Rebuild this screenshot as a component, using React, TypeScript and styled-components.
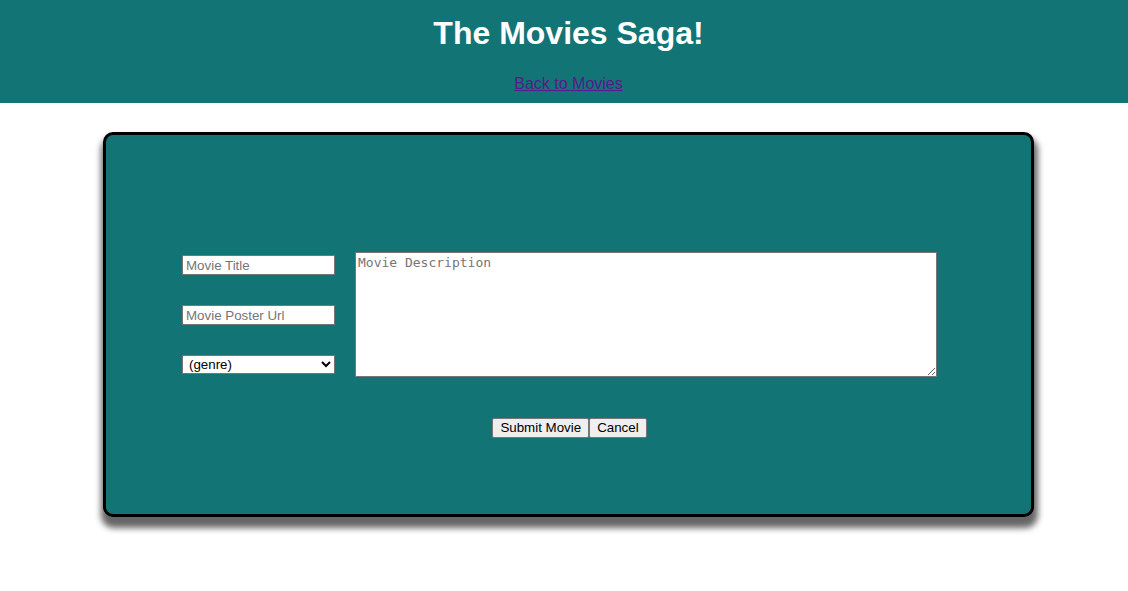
import React from 'react';
import styled, { createGlobalStyle } from 'styled-components';

const GlobalStyle = createGlobalStyle`
  html, body {
    margin: 0;
    padding: 0;
    background: #ffffff;
    font-family: "Liberation Sans", Arial, sans-serif;
  }
`;

const teal = '#127474';

const Header = styled.header`
  background: ${teal};
  height: 103px;
  padding: 15px 0 0 9px;
  box-sizing: border-box;
  display: flex;
  flex-direction: column;
  align-items: center;
`;

const Title = styled.h1`
  margin: 0;
  font-size: 32px;
  font-weight: bold;
  color: #ffffff;
  line-height: 37px;
`;

const BackLink = styled.a`
  margin-top: 22px;
  font-size: 16px;
  line-height: 19px;
  color: #551a8b;
  text-decoration: underline;
`;

const Main = styled.main`
  display: flex;
  justify-content: center;
  padding: 29px 0 60px 9px;
`;

const Card = styled.div`
  width: 931px;
  height: 385px;
  box-sizing: border-box;
  background: ${teal};
  border: 3px solid #000000;
  border-radius: 10px;
  box-shadow: 1px 8px 6px 3px rgba(0, 0, 0, 0.6);
  padding: 117px 0 0 76px;
  display: flex;
  flex-direction: column;
`;

const FormRow = styled.div`
  display: flex;
  align-items: center;
  gap: 20px;
`;

const LeftColumn = styled.div`
  display: flex;
  flex-direction: column;
  gap: 30px;
`;

const TextInput = styled.input`
  width: 153px;
  height: 20px;
  box-sizing: border-box;
  margin: 0;
  padding: 1px 3px;
  border: 1px solid #767676;
  background: #ffffff;
  font-family: "Liberation Sans", Arial, sans-serif;
  font-size: 13.33px;
  color: #000;
  outline: none;
  &::placeholder {
    color: #757575;
  }
`;

const GenreSelect = styled.select`
  width: 153px;
  height: 19px;
  box-sizing: border-box;
  margin: 0;
  padding: 0 2px;
  border: 1px solid #767676;
  border-radius: 0;
  background: #ffffff;
  font-family: "Liberation Sans", Arial, sans-serif;
  font-size: 13.33px;
  color: #000;
`;

const Description = styled.textarea`
  width: 582px;
  height: 125px;
  box-sizing: border-box;
  margin: 0;
  padding: 2px;
  border: 1px solid #767676;
  background: #ffffff;
  font-family: "DejaVu Sans Mono", "Liberation Mono", monospace;
  font-size: 13px;
  line-height: 16px;
  &::placeholder {
    color: #757575;
  }
`;

const ButtonRow = styled.div`
  display: flex;
  justify-content: center;
  margin: 41px 0 0 -74px;
`;

const FormButton = styled.button`
  height: 20px;
  box-sizing: border-box;
  margin: 0;
  padding: 1px 7px;
  border: 1px solid #767676;
  border-radius: 2px;
  background: #efefef;
  font-family: "Liberation Sans", Arial, sans-serif;
  font-size: 13.33px;
  color: #000;
  line-height: 16px;
`;

export default function App() {
  return (
    <>
      <GlobalStyle />
      <Header>
        <Title>The Movies Saga!</Title>
        <BackLink href="#">Back to Movies</BackLink>
      </Header>
      <Main>
        <Card>
          <FormRow>
            <LeftColumn>
              <TextInput placeholder="Movie Title" />
              <TextInput placeholder="Movie Poster Url" />
              <GenreSelect defaultValue="">
                <option value="">(genre)</option>
              </GenreSelect>
            </LeftColumn>
            <Description placeholder="Movie Description" />
          </FormRow>
          <ButtonRow>
            <FormButton>Submit Movie</FormButton>
            <FormButton>Cancel</FormButton>
          </ButtonRow>
        </Card>
      </Main>
    </>
  );
}
